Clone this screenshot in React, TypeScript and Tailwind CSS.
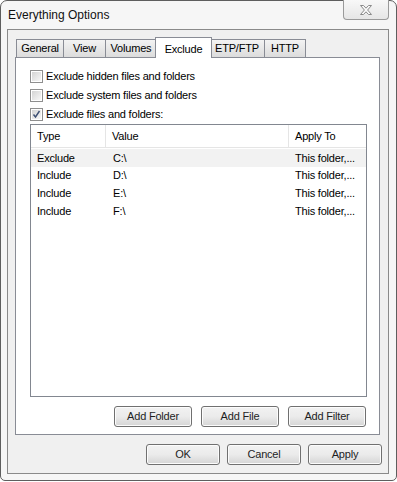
import React from "react";

const tabs = [
  { label: "General", w: 48 },
  { label: "View", w: 42 },
  { label: "Volumes", w: 51 },
  { label: "Exclude", w: 53, active: true },
  { label: "ETP/FTP", w: 55 },
  { label: "HTTP", w: 41 },
];

const rows = [
  { type: "Exclude", value: "C:\\", apply: "This folder,...", hot: true },
  { type: "Include", value: "D:\\", apply: "This folder,..." },
  { type: "Include", value: "E:\\", apply: "This folder,..." },
  { type: "Include", value: "F:\\", apply: "This folder,..." },
];

function CheckBox({ checked }: { checked?: boolean }) {
  return (
    <div className="w-[13px] h-[13px] border border-[#8f8f8f] bg-white p-[1px] shrink-0">
      <div className="w-full h-full bg-gradient-to-br from-[#d4d4d4] to-[#f7f7f7] relative">
        {checked && (
          <svg className="absolute left-0 top-0" width="9" height="9" viewBox="0 0 9 9">
            <path d="M1.5 4.5 L3.5 7 L7.5 1" fill="none" stroke="#3d4f73" strokeWidth="1.4" />
          </svg>
        )}
      </div>
    </div>
  );
}

function Btn({ label, w }: { label: string; w: number }) {
  return (
    <div
      className="h-[21px] border border-[#707070] rounded-[3px] bg-gradient-to-b from-[#f2f2f2] via-[#ebebeb] to-[#d5d5d5] flex items-center justify-center text-[#1e1e1e] shadow-[inset_0_0_0_1px_#fcfcfc]"
      style={{ width: w }}
    >
      {label}
    </div>
  );
}

export default function App() {
  return (
    <div className="w-[397px] h-[482px] bg-white font-['Liberation_Sans',Arial,sans-serif] text-[11px] tracking-[-0.2px] text-black">
      {/* window frame */}
      <div className="w-[397px] h-[481px] rounded-t-[7px] rounded-b-[5px] border border-[#5e5e5e] bg-[#f6f6f6] flex flex-col relative">
        {/* title bar */}
        <div className="h-[28px] flex items-center pl-[7px] text-[12px] tracking-normal text-[#111]">
          Everything Options
        </div>
        {/* close button */}
        <div className="absolute left-[342px] top-[-1px] w-[46px] h-[20px] border border-[#9a9a9a] border-t-0 rounded-b-[4px] bg-gradient-to-b from-[#f8f8f8] to-[#e6e6e6] flex items-center justify-center">
          <svg width="14" height="10" viewBox="0 0 14 10">
            <path
              d="M1.5 0.5 H4.5 L7 3.2 L9.5 0.5 H12.5 L8.6 5 L12.5 9.5 H9.5 L7 6.8 L4.5 9.5 H1.5 L5.4 5 Z"
              fill="#fafafa"
              stroke="#8a8a8a"
              strokeWidth="1"
            />
          </svg>
        </div>

        {/* client area */}
        <div className="ml-[6px] w-[382px] h-[445px] border border-[#8a8a8a] bg-[#f0f0f0] flex flex-col">
          {/* tab strip */}
          <div className="flex items-end h-[27px] pl-[8px] pt-[6px]">
            {tabs.map((t) =>
              t.active ? (
                <div
                  key={t.label}
                  className="h-[21px] -mx-[2px] relative z-10 border border-b-0 border-[#898c95] bg-white flex items-start justify-center pt-[3px] mb-[-1px]"
                  style={{ width: t.w + 4 }}
                >
                  {t.label}
                </div>
              ) : (
                <div
                  key={t.label}
                  className="h-[18px] border border-b-0 border-l-0 first:border-l border-[#898c95] bg-gradient-to-b from-[#f3f3f3] to-[#dcdcdc] flex items-center justify-center"
                  style={{ width: t.w }}
                >
                  {t.label}
                </div>
              )
            )}
          </div>

          {/* tab panel */}
          <div className="ml-[7px] w-[365px] h-[378px] border border-[#898c95] bg-white flex flex-col pl-[14px]">
            <div className="flex flex-col pt-[12px] gap-[6px]">
              <label className="flex items-center gap-[2px] h-[13px]">
                <CheckBox />
                <span className="ml-[1px]">Exclude hidden files and folders</span>
              </label>
              <label className="flex items-center gap-[2px] h-[13px]">
                <CheckBox />
                <span className="ml-[1px]">Exclude system files and folders</span>
              </label>
              <label className="flex items-center gap-[2px] h-[13px]">
                <CheckBox checked />
                <span className="ml-[1px]">Exclude files and folders:</span>
              </label>
            </div>

            {/* list view */}
            <div className="mt-[3px] w-[337px] h-[273px] border border-[#828790] bg-white flex flex-col">
              <div className="h-[23px] flex items-center border-b border-[#e5e5e5]">
                <div className="w-[75px] h-full flex items-center pl-[6px] border-r border-[#e5e5e5]">Type</div>
                <div className="w-[183px] h-full flex items-center pl-[6px] border-r border-[#e5e5e5]">Value</div>
                <div className="flex-1 h-full flex items-center pl-[6px]">Apply To</div>
              </div>
              <div className="pt-[1px]">
                {rows.map((r, i) => (
                  <div
                    key={i}
                    className={`h-[17.7px] flex items-center ${r.hot ? "bg-[#f2f2f2]" : ""}`}
                  >
                    <div className="w-[75px] pl-[6px]">{r.type}</div>
                    <div className="w-[183px] pl-[7px]">{r.value}</div>
                    <div className="flex-1 pl-[6px]">{r.apply}</div>
                  </div>
                ))}
              </div>
            </div>

            {/* add buttons */}
            <div className="mt-[9px] w-[336px] flex justify-end gap-[9px]">
              <Btn label="Add Folder" w={78} />
              <Btn label="Add File" w={78} />
              <Btn label="Add Filter" w={78} />
            </div>
          </div>

          {/* dialog buttons */}
          <div className="mt-[9px] flex justify-end gap-[7px] pr-[6px]">
            <Btn label="OK" w={74} />
            <Btn label="Cancel" w={74} />
            <Btn label="Apply" w={74} />
          </div>
        </div>
      </div>
    </div>
  );
}
